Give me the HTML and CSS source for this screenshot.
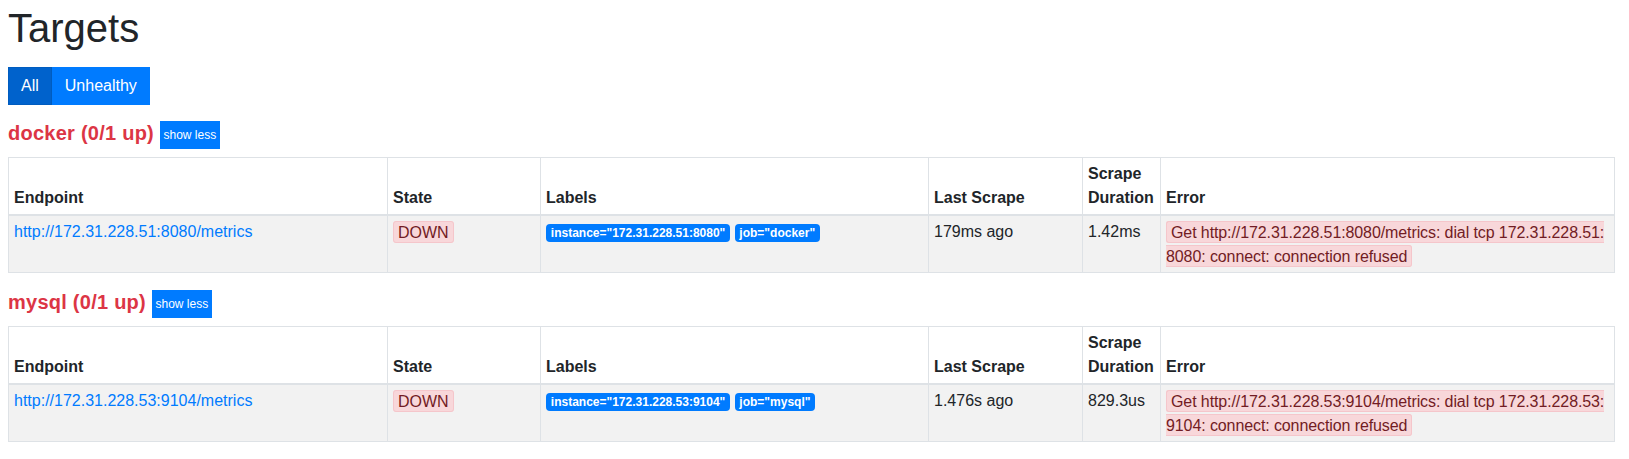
FILE: index.html
```html
<!DOCTYPE html>
<html lang="en">
<head>
<meta charset="utf-8">
<title>Targets</title>
<link rel="stylesheet" href="styles.css">
</head>
<body>
<div class="page">
  <h1 class="title">Targets</h1>
  <div class="btn-group">
    <button class="btn btn-active">All</button><button class="btn">Unhealthy</button>
  </div>

  <section class="pool">
    <div class="pool-head">
      <a class="pool-name" href="#docker">docker (0/1 up)</a>
      <button class="btn-xs">show less</button>
    </div>
    <table class="tbl">
      <colgroup>
        <col class="w-endpoint"><col class="w-state"><col class="w-labels"><col class="w-last"><col class="w-dur"><col class="w-error">
      </colgroup>
      <thead>
        <tr><th>Endpoint</th><th>State</th><th>Labels</th><th>Last Scrape</th><th>Scrape Duration</th><th>Error</th></tr>
      </thead>
      <tbody>
        <tr>
          <td><a class="link" href="#">http://172.31.228.51:8080/metrics</a></td>
          <td><span class="danger">DOWN</span></td>
          <td><span class="badge">instance="172.31.228.51:8080"</span> <span class="badge">job="docker"</span></td>
          <td>179ms ago</td>
          <td>1.42ms</td>
          <td class="c-error"><span class="danger err">Get http://172.31.228.51:8080/metrics: dial tcp 172.31.228.51:8080: connect: connection refused</span></td>
        </tr>
      </tbody>
    </table>
  </section>

  <section class="pool">
    <div class="pool-head">
      <a class="pool-name" href="#mysql">mysql (0/1 up)</a>
      <button class="btn-xs">show less</button>
    </div>
    <table class="tbl">
      <colgroup>
        <col class="w-endpoint"><col class="w-state"><col class="w-labels"><col class="w-last"><col class="w-dur"><col class="w-error">
      </colgroup>
      <thead>
        <tr><th>Endpoint</th><th>State</th><th>Labels</th><th>Last Scrape</th><th>Scrape Duration</th><th>Error</th></tr>
      </thead>
      <tbody>
        <tr>
          <td><a class="link" href="#">http://172.31.228.53:9104/metrics</a></td>
          <td><span class="danger">DOWN</span></td>
          <td><span class="badge">instance="172.31.228.53:9104"</span> <span class="badge">job="mysql"</span></td>
          <td>1.476s ago</td>
          <td>829.3us</td>
          <td class="c-error"><span class="danger err">Get http://172.31.228.53:9104/metrics: dial tcp 172.31.228.53:9104: connect: connection refused</span></td>
        </tr>
      </tbody>
    </table>
  </section>
</div>
</body>
</html>
```
FILE: styles.css
```css
* { box-sizing: border-box; }

body {
  margin: 0;
  font-family: "Liberation Sans", Arial, sans-serif;
  font-size: 16px;
  line-height: 1.5;
  color: #212529;
  background: #fff;
}

.page {
  padding: 4px 15px 0 8px;
}

.title {
  margin: 0 0 15px;
  font-size: 40px;
  font-weight: 400;
  line-height: 48px;
}

.btn-group {
  display: flex;
}

.btn {
  font-family: inherit;
  font-size: 16px;
  line-height: 24px;
  padding: 6px 12px;
  border: 1px solid #007bff;
  background: #007bff;
  color: #fff;
  border-radius: 0;
  margin: 0;
}

.btn-active {
  background: #0062cc;
  border-color: #005cbf;
}

.pool {
  margin-top: 16px;
}

.pool + .pool {
  margin-top: 17px;
}

.pool-head {
  display: flex;
  align-items: flex-start;
  height: 28px;
  margin-bottom: 8px;
}

.pool-name {
  font-size: 20px;
  font-weight: 700;
  line-height: 24px;
  letter-spacing: 0.25px;
  color: #dc3545;
  text-decoration: none;
}

.btn-xs {
  margin-left: 6px;
  font-family: inherit;
  font-size: 12px;
  line-height: 20px;
  padding: 4px 3.5px;
  border: 0;
  border-radius: 0;
  background: #007bff;
  color: #fff;
}

.tbl {
  width: 100%;
  border-collapse: collapse;
  table-layout: fixed;
}

.w-endpoint { width: 379px; }
.w-state { width: 153px; }
.w-labels { width: 388px; }
.w-last { width: 154px; }
.w-dur { width: 78px; }
.w-error { width: 454px; }

.tbl th,
.tbl td {
  border: 1px solid #dee2e6;
  padding: 4px 5px;
  text-align: left;
  vertical-align: top;
}

.tbl thead th {
  vertical-align: bottom;
  border-bottom: 2px solid #dee2e6;
  font-weight: 700;
}

.tbl tbody tr {
  background: #f2f2f2;
}

.link {
  color: #007bff;
  text-decoration: none;
}

.danger {
  background: #f8d7da;
  border: 1px solid #f5c6cb;
  color: #721c24;
  border-radius: 3px;
  padding: 1.5px 4px;
}

.c-error {
  word-break: break-all;
}

.err {
  letter-spacing: -0.1px;
}

.badge {
  display: inline-block;
  padding: 3px 4.8px;
  font-size: 12px;
  font-weight: 700;
  line-height: 1;
  color: #fff;
  background: #007bff;
  border-radius: 4px;
  white-space: nowrap;
  vertical-align: baseline;
}
```
